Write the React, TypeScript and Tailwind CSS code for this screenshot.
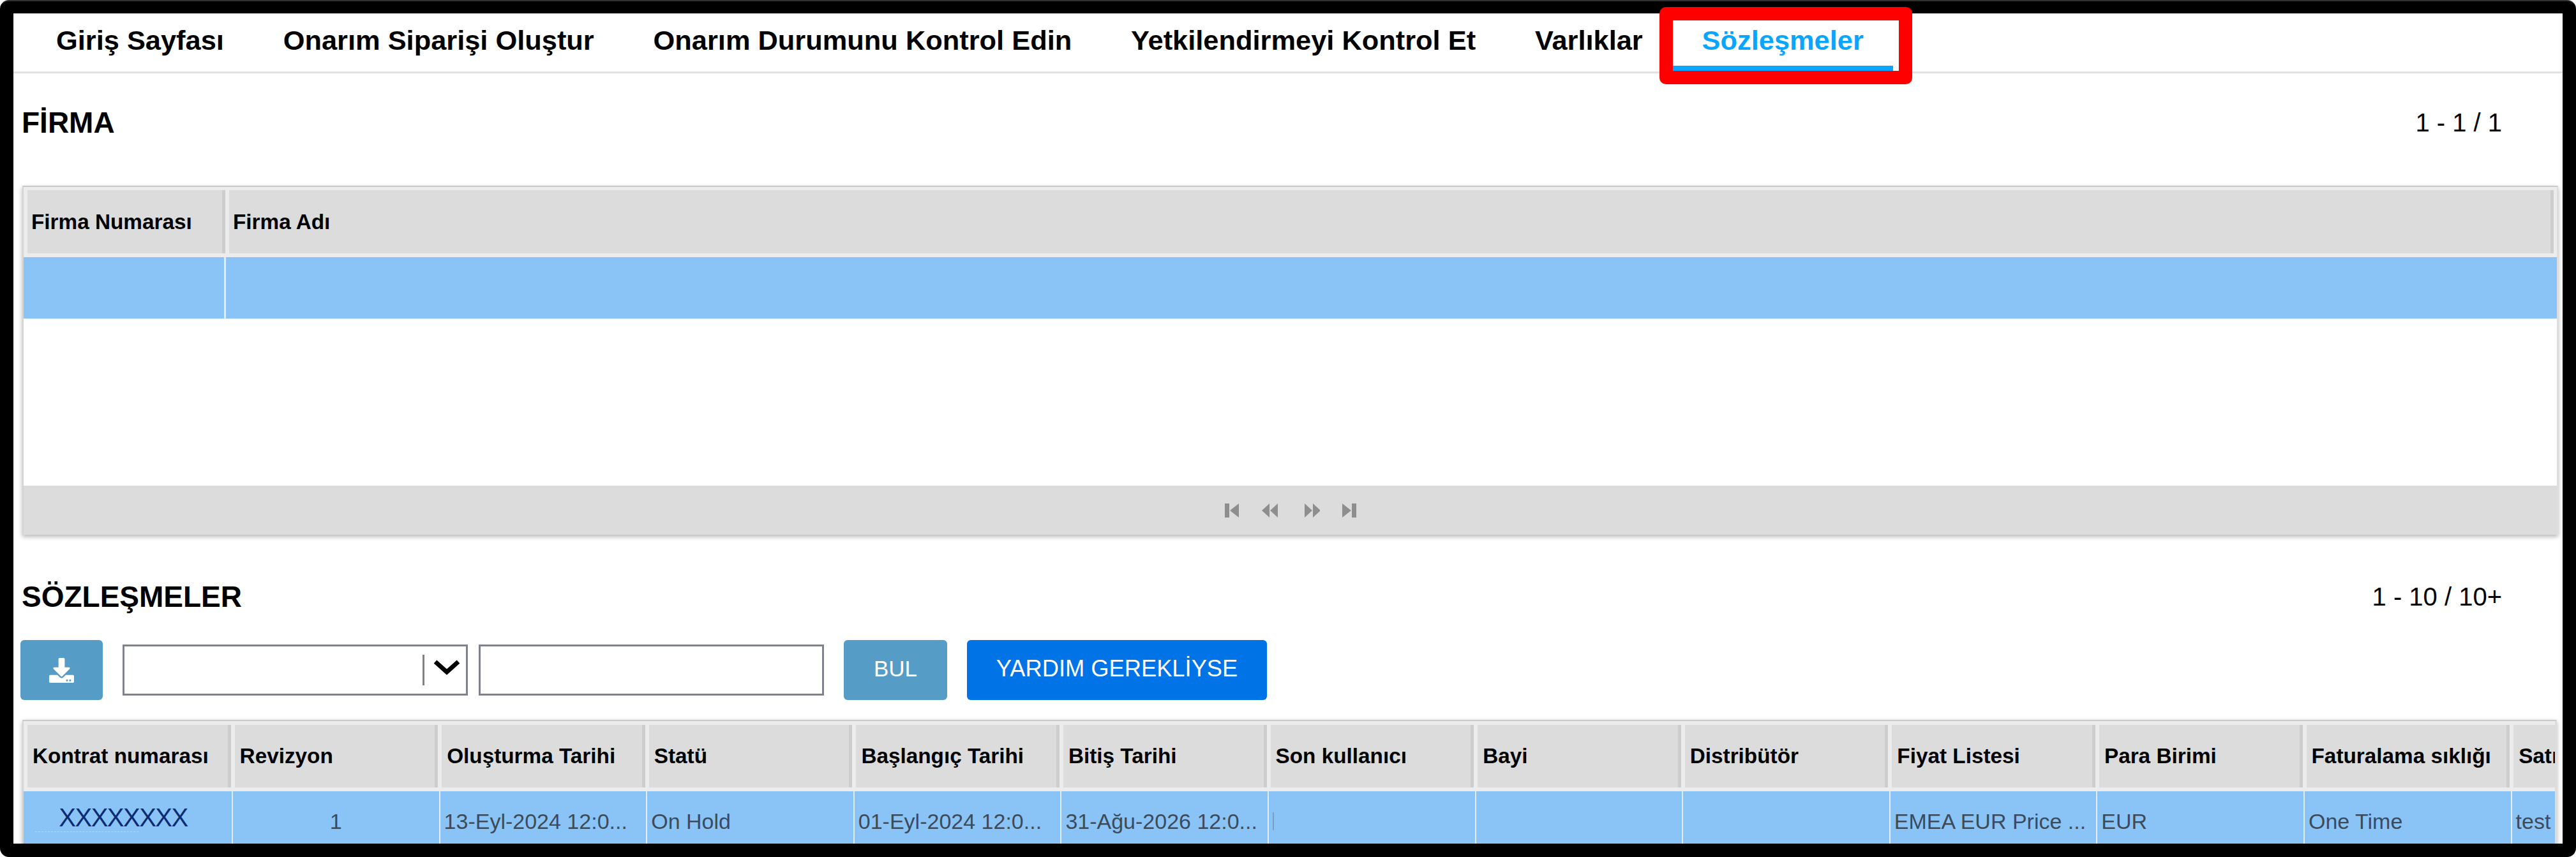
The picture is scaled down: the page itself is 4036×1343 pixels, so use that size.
import React from "react";
import { FaDownload } from "react-icons/fa";

const tabs = ["Giriş Sayfası", "Onarım Siparişi Oluştur", "Onarım Durumunu Kontrol Edin", "Yetkilendirmeyi Kontrol Et", "Varlıklar"];
const headers = ["Kontrat numarası", "Revizyon", "Oluşturma Tarihi", "Statü", "Başlangıç Tarihi", "Bitiş Tarihi", "Son kullanıcı", "Bayi", "Distribütör", "Fiyat Listesi", "Para Birimi", "Faturalama sıklığı", "Satı"];
const values = ["", "", "13-Eyl-2024 12:0...", "On Hold", "01-Eyl-2024 12:0...", "31-Ağu-2026 12:0...", "", "", "", "EMEA EUR Price ...", "EUR", "One Time", "test"];

function Pager({ d, className }: { d: string; className: string }) {
  return (
    <svg viewBox="0 0 24 22" className={className} fill="#8e8e8e">
      <path d={d} />
    </svg>
  );
}

export default function App() {
  return (
    <div className="relative h-[1343px] w-[4036px] overflow-hidden rounded-[14px] border-t-2 border-[#303030] bg-black px-[21px] pb-[21px] pt-[19px] font-['Liberation_Sans',Arial,sans-serif] text-black">
      <div className="h-full w-full overflow-hidden bg-white">
        <nav className="flex h-[94px] border-b-[3px] border-[#e2e2e2] pl-[20.6px]">
          {tabs.map((t) => (
            <div key={t} className="h-[90px] whitespace-nowrap px-[46.4px] pt-[17px] text-[43.4px] font-bold leading-[50px]">
              {t}
            </div>
          ))}
          <div className="h-[90px] whitespace-nowrap border-b-[8px] border-[#0aa5ff] px-[46.4px] pt-[17px] text-[43.4px] font-bold leading-[50px] text-[#0aa5ff]">
            Sözleşmeler
          </div>
        </nav>

        <div className="mt-[52px] flex h-[50px] items-center justify-between pl-[13px] pr-[95px] leading-[50px]">
          <h2 className="text-[46px] font-bold">FİRMA</h2>
          <span className="text-[40px]">1 - 1 / 1</span>
        </div>

        <section className="ml-[14px] mt-[74px] flex h-[547px] w-[3973px] flex-col border-x-2 border-t-2 border-l-[#d4d4d4] border-r-[#dedede] border-t-[#c8c8c8] shadow-[0_3px_7px_rgba(0,0,0,0.3)]">
          <div className="flex h-[110px] gap-[6px] bg-[#ececec] pb-[6px] pl-[6px] pr-[5px] pt-[5px]">
            <div className="flex w-[310px] items-center border-r-[5px] border-[#cdcdcd] bg-[#dcdcdc] pl-[6px] text-[33.3px] font-bold">Firma Numarası</div>
            <div className="flex flex-1 items-center border-r-[5px] border-[#cdcdcd] bg-[#dcdcdc] pl-[6px] text-[33.3px] font-bold">Firma Adı</div>
          </div>
          <div className="flex h-[97px] border-b border-[#e6e6e6] bg-[#8ac4f6]">
            <div className="w-[317px] border-r-[3px] border-[#e4ecf2]" />
            <div className="flex-1" />
          </div>
          <div className="flex-1 bg-white" />
          <div className="flex h-[77px] items-center justify-center bg-[#dcdcdc]">
            <Pager className="h-[22px] w-[24px]" d="M1 0h7v22H1zM23 0v22L9 11z" />
            <Pager className="ml-[34px] h-[22px] w-[26px]" d="M12 0v22L0 11zM25 0v22L13 11z" />
            <Pager className="ml-[40px] h-[22px] w-[26px]" d="M1 0v22l12-11zM14 0v22l12-11z" />
            <Pager className="ml-[34px] h-[22px] w-[24px]" d="M1 0v22l14-11zM16 0h7v22h-7z" />
          </div>
        </section>

        <div className="mt-[72px] flex h-[50px] items-center justify-between pl-[13px] pr-[95px] leading-[50px]">
          <h2 className="text-[46px] font-bold">SÖZLEŞMELER</h2>
          <span className="text-[40px]">1 - 10 / 10+</span>
        </div>

        <div className="ml-[11px] mt-[43px] flex h-[94px] items-center">
          <button className="flex h-[94px] w-[129px] items-center justify-center rounded-[6px] bg-[#559cc7] text-white">
            <FaDownload className="h-[39px] w-[39px]" />
          </button>
          <div className="ml-[31px] flex h-[80px] w-[541px] items-center border-[3px] border-[#7f828b] bg-white pl-[467px]">
            <div className="h-[48px] w-[3px] bg-[#808080]" />
            <svg viewBox="0 0 44 24" className="mb-[8px] ml-[13px] h-[24px] w-[44px]">
              <path d="M4 3 L22 19 L40 3" fill="none" stroke="#000" strokeWidth="7" />
            </svg>
          </div>
          <input className="ml-[17px] h-[80px] w-[541px] border-[3px] border-[#7f828b] bg-white" />
          <button className="ml-[31px] h-[94px] w-[162px] rounded-[6px] bg-[#559cc7] pb-[4px] text-[35px] text-white">BUL</button>
          <button className="ml-[31px] h-[94px] w-[470px] rounded-[6px] bg-[#0073e6] pb-[4px] text-[36.3px] text-white">YARDIM GEREKLİYSE</button>
        </div>

        <section className="ml-[14px] mt-[31px] h-[300px] w-[3971px] overflow-hidden border-l-2 border-r-[3px] border-t-2 border-l-[#d4d4d4] border-r-[#dcdcdc] border-t-[#c8c8c8] shadow-[0_3px_7px_rgba(0,0,0,0.3)]">
          <div className="flex h-[110px] gap-[6px] overflow-hidden bg-[#ececec] pb-[6px] pl-[6px] pt-[6px]">
            {headers.map((h, i) => (
              <div key={h} className={`flex w-[318.6px] shrink-0 items-center ${i < 12 ? "border-r-[5px] border-[#cdcdcd]" : ""} bg-[#dcdcdc] pl-[8px] text-[33.3px] font-bold whitespace-nowrap`}>
                {h}
              </div>
            ))}
          </div>
          <div className="flex h-[94px] overflow-hidden bg-[#8ac4f6] text-[34px] text-[#3c4b5b]">
            <div className="relative flex w-[328px] shrink-0 items-center justify-center border-r-2 border-[#e4ecf2] pb-[12px] pr-[14px] text-[40px] tracking-[-1.5px] text-[#0b2c74]">
              XXXXXXXX
              <span className="absolute left-[18px] top-[63px] w-[162px] border-t border-dashed border-[#aadafc]" />
            </div>
            <div className="flex w-[324.6px] shrink-0 items-center justify-center border-r-2 border-[#e4ecf2]">1</div>
            {values.slice(2).map((v, i) => (
              <div key={i} className="flex w-[324.6px] shrink-0 items-center whitespace-nowrap border-r-2 border-[#e4ecf2] pl-[6px]">
                {i === 4 ? <span className="h-[28px] w-[2px] bg-[#7f9fc0]" /> : v}
              </div>
            ))}
          </div>
        </section>
      </div>

      <div className="absolute left-[2600px] top-[9px] h-[121px] w-[396px] rounded-[10px] border-[21px] border-[#ff0000]" />
    </div>
  );
}
